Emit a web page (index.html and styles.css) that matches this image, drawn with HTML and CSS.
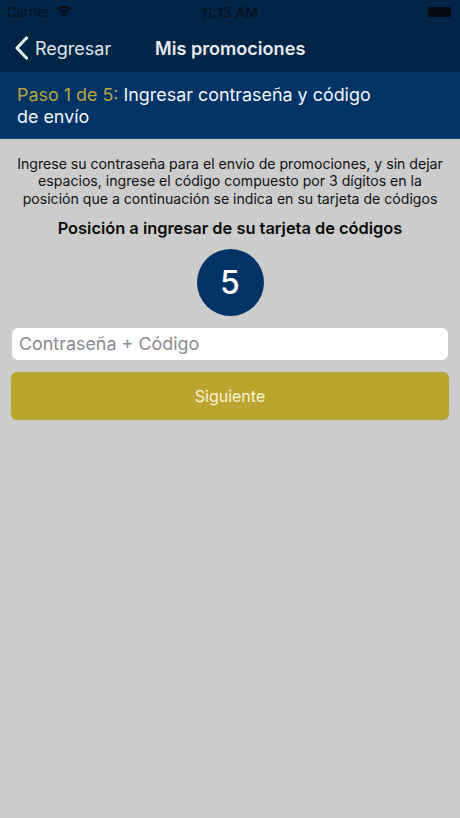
FILE: index.html
```html
<!DOCTYPE html>
<html lang="es">
    <head>
        <meta charset="UTF-8" />
        <meta name="viewport" content="width=device-width, initial-scale=1.0" />
        <title>Mis promociones</title>
        <link rel="stylesheet" href="styles.css">
    </head>
    <body>
        <div class="header">
            <div class="status-bar">
                <div class="carrier">
                    Carrier
                    <svg class="wifi" width="16" height="12" viewBox="0 0 16 12">
                        <path d="M0.3 3.9 A11 11 0 0 1 15.7 3.9 L14.1 5.6 A8.7 8.7 0 0 0 1.9 5.6 Z" />
                        <path d="M3 6.6 A7.2 7.2 0 0 1 13 6.6 L11.4 8.3 A5 5 0 0 0 4.6 8.3 Z" />
                        <path d="M5.7 9.3 A3.4 3.4 0 0 1 10.3 9.3 L8 11.7 Z" />
                    </svg>
                </div>
                <div class="time">11:13 AM</div>
                <div class="battery"></div>
            </div>
            <div class="nav">
                <div class="back">
                    <svg width="15" height="24" viewBox="0 0 15 24">
                        <path d="M12.5 2 L3 12 L12.5 22" fill="none" stroke="#e6ebf0" stroke-width="3.2" stroke-linecap="round" stroke-linejoin="round" />
                    </svg>
                    <span>Regresar</span>
                </div>
                <div class="nav-title">Mis promociones</div>
            </div>
        </div>
        <div class="step">
            <p><span class="step-num">Paso 1 de 5:</span> Ingresar contraseña y código<br>de envío</p>
        </div>
        <div class="content">
            <p class="intro">Ingrese su contraseña para el envío de promociones, y sin dejar espacios, ingrese el código compuesto por 3 dígitos en la posición que a continuación se indica en su tarjeta de códigos</p>
            <h2 class="position-title">Posición a ingresar de su tarjeta de códigos</h2>
            <div class="position">5</div>
            <input class="code-input" type="text" placeholder="Contraseña + Código">
            <button class="next-button">Siguiente</button>
        </div>
    </body>
</html>
```

FILE: styles.css
```css
* {
    box-sizing: border-box;
}
html, body {
    height: 100%;
}
body {
    margin: 0;
    font-family: Inter, "Liberation Sans", sans-serif;
    background-color: #cccccc;
    color: #111;
    overflow: hidden;
}
.header {
    height: 72px;
    background-color: #012546;
}
.status-bar {
    height: 24px;
    padding: 0 8px 0 7px;
    display: grid;
    grid-template-columns: 1fr auto 1fr;
    align-items: center;
    font-size: 13px;
    color: #06101a;
}
.carrier {
    display: flex;
    align-items: center;
    gap: 6px;
}
.wifi {
    fill: #06101a;
    margin-top: -2px;
}
.time {
    font-size: 14px;
    font-weight: 500;
}
.battery {
    justify-self: end;
    width: 23px;
    height: 10px;
    margin-top: -1px;
    margin-right: 1px;
    background-color: #050a10;
    border-radius: 2px;
}
.nav {
    height: 48px;
    display: flex;
    align-items: center;
    padding-left: 14px;
}
.back {
    display: flex;
    align-items: center;
    gap: 6px;
    width: 141px;
    font-size: 18px;
    color: #dfe4ea;
}
.nav-title {
    font-size: 18.1px;
    font-weight: 600;
    color: #e6ebf0;
}
.step {
    height: 67px;
    padding: 12px 17px 0;
    background-color: #003366;
    border-bottom: 1px solid #1d4a75;
    font-size: 17.9px;
    line-height: 22px;
    color: #f2f6fa;
}
.step p {
    margin: 0;
}
.step-num {
    color: #b5a642;
}
.content {
    display: flex;
    flex-direction: column;
    align-items: center;
    padding: 16px 11px 0;
}
.intro {
    margin: 0;
    font-size: 14.1px;
    line-height: 17.3px;
    text-align: center;
}
.position-title {
    margin: 11px 0 0;
    font-size: 16.4px;
    line-height: 20px;
    font-weight: 600;
    color: #0c0c0c;
}
.position {
    width: 67px;
    height: 67px;
    margin-top: 11px;
    display: flex;
    justify-content: center;
    align-items: center;
    border-radius: 50%;
    background-color: #003366;
    color: #fff;
    font-size: 32px;
    font-weight: 500;
}
.code-input {
    width: 436px;
    height: 32px;
    margin-top: 12px;
    padding: 0 7px;
    border: none;
    border-radius: 6px;
    background-color: #fff;
    font-family: inherit;
    font-size: 17.9px;
    outline: none;
}
.code-input::placeholder {
    color: #8a8a8e;
    opacity: 1;
}
.next-button {
    width: 438px;
    height: 48px;
    margin-top: 12px;
    border: none;
    border-radius: 6px;
    background-color: #bba52f;
    color: #f7f3da;
    font-family: inherit;
    font-size: 16px;
}
```
